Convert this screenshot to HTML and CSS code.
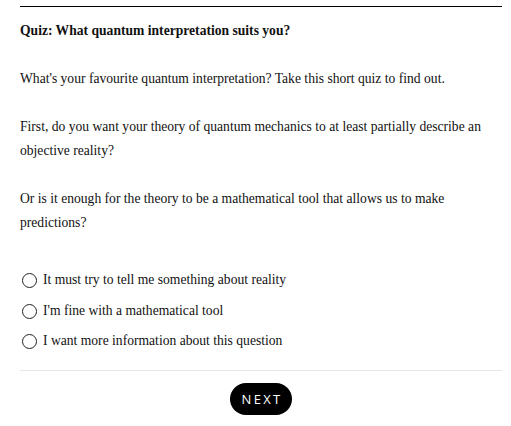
FILE: index.html
```html
<!DOCTYPE html>
<html lang="en">
<head>
    <meta charset="UTF-8">
    <meta name="viewport" content="width=device-width, initial-scale=1.0">
    <title>Quiz</title>
    <link rel="stylesheet" href="styles.css">
</head>
<body>

<div class="quiz">
    <h2 class="quiz-title">Quiz: What quantum interpretation suits you?</h2>
    <p>What's your favourite quantum interpretation? Take this short quiz to find out.</p>
    <p>First, do you want your theory of quantum mechanics to at least partially describe an objective reality?</p>
    <p>Or is it enough for the theory to be a mathematical tool that allows us to make predictions?</p>

    <div class="options">
        <label class="option"><input type="radio" name="answer" value="1"><span>It must try to tell me something about reality</span></label>
        <label class="option"><input type="radio" name="answer" value="2"><span>I'm fine with a mathematical tool</span></label>
        <label class="option"><input type="radio" name="answer" value="3"><span>I want more information about this question</span></label>
    </div>

    <div class="button-row">
        <input type="button" value="NEXT" id="button-next">
    </div>
</div>

</body>
</html>
```

FILE: styles.css
```css
* {
    box-sizing: border-box;
}

html, body {
    margin: 0;
    background-color: #fff;
    color: #111;
    font-family: "Liberation Serif", "Times New Roman", serif;
    font-size: 13.6px;
    line-height: 24px;
}

.quiz {
    margin: 6px 9px 0 20px;
    border-top: 1px solid #000;
    padding-top: 12px;
}

.quiz-title {
    font-size: 13.6px;
    line-height: 24px;
    font-weight: bold;
    margin: 0;
}

.quiz p {
    margin: 24px 0 0 0;
}

.options {
    margin-top: 30px;
    padding-bottom: 13px;
    border-bottom: 1px solid #e6e6e6;
}

.option {
    display: flex;
    align-items: center;
    height: 30.5px;
}

input[type=radio] {
    appearance: none;
    width: 15px;
    height: 15px;
    margin: 1px 6px 0 2px;
    border: 1.5px solid #222;
    border-radius: 50%;
}

.button-row {
    display: flex;
    justify-content: center;
    padding-top: 12px;
}

input[type=button] {
    font-family: "Open Sans", sans-serif;
    font-size: 13px;
    letter-spacing: 2.3px;
    color: #fff;
    background-color: #000;
    border: none;
    border-radius: 16px;
    height: 32px;
    padding: 0 10px 0 12px;
}
```
